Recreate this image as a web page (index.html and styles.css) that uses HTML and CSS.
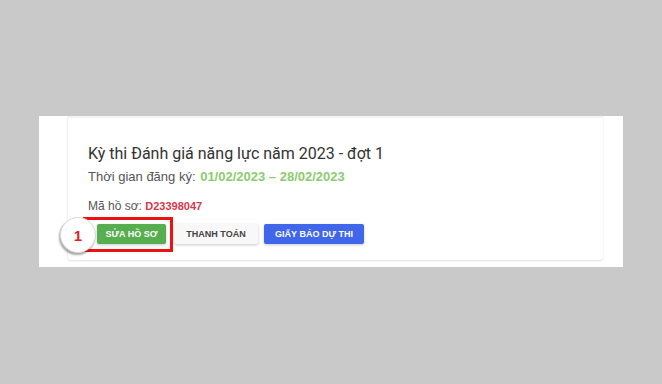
FILE: index.html
```html
<!DOCTYPE html>
<html lang="vi">
<head>
<meta charset="utf-8">
<link rel="stylesheet" href="styles.css">
</head>
<body>
<div class="panel">
  <div class="card">
    <h1 class="title">Kỳ thi Đánh giá năng lực năm 2023 - đợt 1</h1>
    <div class="period"><span class="label">Thời gian đăng ký:</span> <span class="dates">01/02/2023 – 28/02/2023</span></div>
    <div class="code"><span class="label">Mã hồ sơ:</span> <span class="codeval">D23398047</span></div>
    <div class="actions">
      <button class="btn btn-green">SỬA HỒ SƠ</button>
      <button class="btn btn-white">THANH TOÁN</button>
      <button class="btn btn-blue">GIẤY BÁO DỰ THI</button>
    </div>
    <div class="highlight"></div>
    <div class="step">1</div>
  </div>
</div>
</body>
</html>
```
FILE: styles.css
```css
html, body {
  margin: 0;
  padding: 0;
  background: #c9c9c9;
  width: 662px;
  height: 384px;
  overflow: hidden;
}
.panel {
  margin: 116px 0 0 39px;
  width: 584px;
  height: 151px;
  background: #fff;
  overflow: hidden;
  font-family: "Liberation Sans", Arial, sans-serif;
}
.card {
  position: relative;
  margin-left: 29px;
  width: 535px;
  height: 144px;
  padding: 26px 0 0 20px;
  box-sizing: border-box;
  background: #fff;
  border-top: 2px solid #f3f3f3;
  box-shadow: 0 1px 2px rgba(0,0,0,0.12), -1px 0 2px rgba(0,0,0,0.04);
  border-radius: 0 0 3px 3px;
}
.title {
  margin: 0;
  font-family: Roboto, "Liberation Sans", sans-serif;
  font-weight: 400;
  font-size: 16px;
  line-height: 20px;
  color: #333;
}
.period {
  margin-top: 5px;
  font-size: 13px;
  line-height: 16px;
}
.label { color: #555; }
.dates {
  color: #8ccb6f;
  font-weight: 700;
  margin-left: 1px;
}
.code {
  margin-top: 14px;
  font-size: 12px;
  line-height: 15px;
}
.codeval {
  color: #d8364b;
  font-weight: 700;
  font-size: 11px;
}
.actions {
  display: flex;
  margin-top: 10px;
  margin-left: 9px;
}
.btn {
  height: 20px;
  border: 0;
  border-radius: 2px;
  font-family: "Liberation Sans", Arial, sans-serif;
  font-weight: 700;
  font-size: 9px;
  padding: 0;
  box-shadow: 0 1px 3px rgba(0,0,0,0.22);
}
.btn-green {
  width: 69px;
  background: #56ae4f;
  color: #fff;
}
.btn-white {
  width: 84px;
  margin-left: 8px;
  background: #f8f8f8;
  color: #444;
}
.btn-blue {
  width: 100px;
  margin-left: 6px;
  background: #4066e9;
  color: #fff;
}
.highlight {
  position: absolute;
  left: 15px;
  top: 99px;
  width: 90px;
  height: 35px;
  box-sizing: border-box;
  border: 3px solid #ee1111;
}
.step {
  position: absolute;
  left: -8px;
  top: 99px;
  width: 34px;
  height: 34px;
  border-radius: 50%;
  background: #fff;
  border: 1px solid #d8d8d8;
  box-shadow: -1px 2px 2px rgba(0,0,0,0.35);
  color: #e0202a;
  font-family: "Liberation Sans", Arial, sans-serif;
  font-weight: 700;
  font-size: 15px;
  display: flex;
  align-items: center;
  justify-content: center;
}
```
